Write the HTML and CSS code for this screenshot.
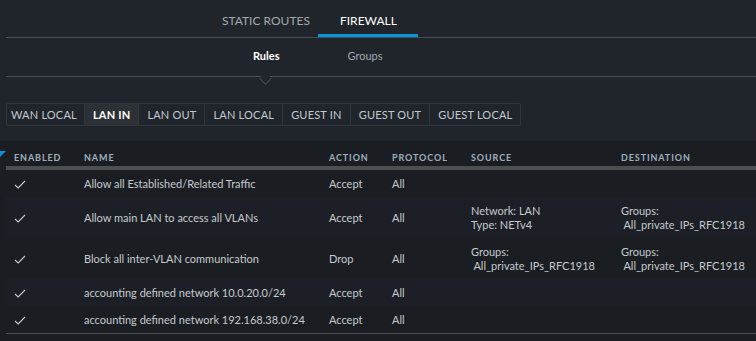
FILE: index.html
```html
<!DOCTYPE html>
<html>
<head>
<meta charset="utf-8">
<link rel="stylesheet" href="styles.css">
</head>
<body>
<div class="page">
  <nav class="tabs">
    <a class="tab">STATIC ROUTES</a>
    <a class="tab active">FIREWALL</a>
  </nav>
  <nav class="subtabs">
    <a class="subtab active">Rules</a>
    <a class="subtab">Groups</a>
  </nav>
  <div class="btn-row">
    <div class="btn-group">
      <button class="btn">WAN LOCAL</button>
      <button class="btn active">LAN IN</button>
      <button class="btn">LAN OUT</button>
      <button class="btn">LAN LOCAL</button>
      <button class="btn">GUEST IN</button>
      <button class="btn">GUEST OUT</button>
      <button class="btn">GUEST LOCAL</button>
    </div>
  </div>
  <div class="table-wrap">
    <span class="corner"></span>
    <table class="rules">
      <thead>
        <tr>
          <th class="c-en">ENABLED</th>
          <th class="c-name">NAME</th>
          <th class="c-act">ACTION</th>
          <th class="c-proto">PROTOCOL</th>
          <th class="c-src">SOURCE</th>
          <th class="c-dst">DESTINATION</th>
        </tr>
      </thead>
      <tbody>
        <tr>
          <td class="c-en"><svg class="check" viewBox="0 0 12 9"><path d="M1 5 L4.2 8 L11 1"/></svg></td>
          <td>Allow all Established/Related Traffic</td>
          <td>Accept</td>
          <td>All</td>
          <td></td>
          <td></td>
        </tr>
        <tr class="alt">
          <td class="c-en"><svg class="check" viewBox="0 0 12 9"><path d="M1 5 L4.2 8 L11 1"/></svg></td>
          <td>Allow main LAN to access all VLANs</td>
          <td>Accept</td>
          <td>All</td>
          <td>Network: LAN<br>Type: NETv4</td>
          <td>Groups:<br>&nbsp;All_private_IPs_RFC1918</td>
        </tr>
        <tr>
          <td class="c-en"><svg class="check" viewBox="0 0 12 9"><path d="M1 5 L4.2 8 L11 1"/></svg></td>
          <td>Block all inter-VLAN communication</td>
          <td>Drop</td>
          <td>All</td>
          <td>Groups:<br>&nbsp;All_private_IPs_RFC1918</td>
          <td>Groups:<br>&nbsp;All_private_IPs_RFC1918</td>
        </tr>
        <tr class="alt">
          <td class="c-en"><svg class="check" viewBox="0 0 12 9"><path d="M1 5 L4.2 8 L11 1"/></svg></td>
          <td>accounting defined network 10.0.20.0/24</td>
          <td>Accept</td>
          <td>All</td>
          <td></td>
          <td></td>
        </tr>
        <tr>
          <td class="c-en"><svg class="check" viewBox="0 0 12 9"><path d="M1 5 L4.2 8 L11 1"/></svg></td>
          <td>accounting defined network 192.168.38.0/24</td>
          <td>Accept</td>
          <td>All</td>
          <td></td>
          <td></td>
        </tr>
      </tbody>
    </table>
  </div>
</div>
</body>
</html>
```
FILE: styles.css
```css
* { box-sizing: border-box; }
html, body {
  margin: 0;
  padding: 0;
  background: #1f252b;
  height: 100%;
  overflow: hidden;
}
body {
  font-family: Lato, "Open Sans", sans-serif;
  color: #c9cdd1;
}
.page {
  padding-left: 6px;
  height: 100%;
  display: flex;
  flex-direction: column;
}
.tabs {
  display: flex;
  height: 38px;
  border-bottom: 1px solid #4b4f53;
  padding-left: 216px;
  flex: none;
}
.tab {
  display: block;
  font-size: 12px;
  line-height: 36px;
  padding: 3px 8px 0 0;
  color: #a3a9ae;
  border-bottom: 3px solid transparent;
  height: 37px;
}
.tab.active {
  color: #ffffff;
  border-bottom-color: #0796de;
  padding: 3px 21px 0 22px;
}
.subtabs {
  position: relative;
  display: flex;
  height: 39px;
  border-bottom: 1px solid #4b4f53;
  padding-left: 213px;
  flex: none;
}
.subtab {
  font-size: 11px;
  line-height: 35px;
  color: #a3a9ae;
  padding: 0 34px;
  position: relative;
}
.subtab.active {
  color: #ffffff;
  font-weight: 700;
}
.subtab.active::after {
  content: "";
  position: absolute;
  left: 50%;
  bottom: -7px;
  width: 8px;
  height: 8px;
  margin-left: -5px;
  background: #1f252b;
  border-right: 1px solid #4b4f53;
  border-bottom: 1px solid #4b4f53;
  transform: rotate(45deg);
}
.btn-row {
  flex: none;
  padding-top: 26px;
}
.btn-group {
  display: inline-flex;
  border: 1px solid #30363c;
  border-radius: 2px;
}
.btn {
  font-family: Lato, sans-serif;
  font-size: 11px;
  letter-spacing: 0.2px;
  color: #c3c9cf;
  background: transparent;
  border: none;
  border-left: 1px solid #30363c;
  height: 21px;
  padding: 0 8px;
  line-height: 21px;
}
.btn:first-child { border-left: none; padding-left: 4px; padding-right: 7px; }
.btn.active {
  background: #2c3136;
  color: #ffffff;
  font-weight: 700;
}
.table-wrap {
  position: relative;
  margin-top: 15px;
  margin-left: -6px;
  padding-left: 6px;
  background: #1a1e23;
  flex: 1;
}
.corner {
  position: absolute;
  left: 0;
  top: 10px;
  width: 0;
  height: 0;
  border-top: 6px solid #0b8fd8;
  border-right: 6px solid transparent;
}
.rules {
  width: 100%;
  border-collapse: collapse;
  font-size: 11px;
}
.rules th {
  font-size: 9px;
  font-weight: 700;
  letter-spacing: 0.9px;
  color: #9eb0bd;
  text-align: left;
  height: 27px;
  padding: 7px 0 0;
  vertical-align: middle;
  border-bottom: 4px solid #4a4f52;
}
.rules td {
  padding: 7px 0 6px;
  line-height: 14px;
  vertical-align: middle;
  color: #c6cacd;
}
.rules tbody tr:last-child td { border-bottom: 1px solid #4b4f53; }
.rules tr.alt td { background: #1c2026; }
.c-en { width: 78px; padding-left: 8px !important; }
.c-name { width: 245px; }
.c-act { width: 63px; }
.c-proto { width: 79px; }
.c-src { width: 150px; }
.check {
  width: 12px;
  height: 9px;
  display: block;
  fill: none;
  stroke: #c4c9cd;
  stroke-width: 1.1;
}
```
